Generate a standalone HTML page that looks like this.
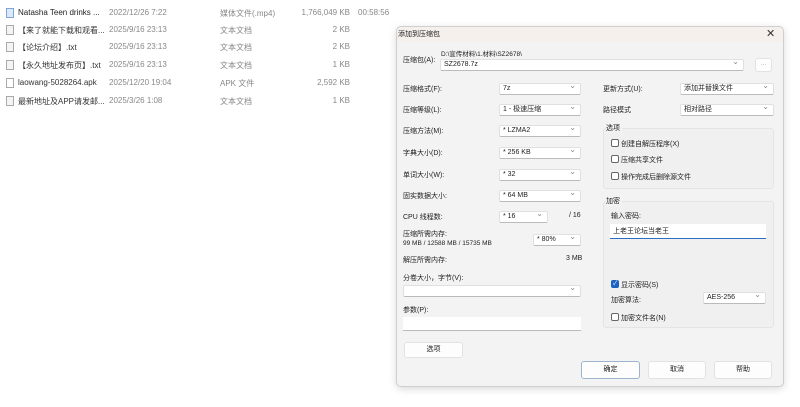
<!DOCTYPE html>
<html><head><meta charset="utf-8"><style>
*{margin:0;padding:0;box-sizing:border-box}
body{width:800px;height:407px;background:#fff;position:relative;overflow:hidden;font-family:"Liberation Sans","Noto Sans CJK SC",sans-serif;color:#222}
.a{position:absolute;white-space:nowrap}
.f{font-size:8px;color:#333}
.n{width:90px;overflow:hidden}
.g{color:#888}
.ic{position:absolute;width:8px;height:10px;border:1px solid #aaa;background:#f4f4f4}
.d{font-size:7px;color:#222}
.cb{position:absolute;background:#fff;border:1px solid #e0e0e0;border-bottom-color:#bbb;border-radius:2px;font-size:7px;padding-left:3px;line-height:10px}
.cb:after{content:"⌄";position:absolute;right:4px;top:-3px;color:#888;font-size:8px}
.chk{position:absolute;width:8px;height:8px;border:1px solid #666;border-radius:2px;background:#fff}
.btn{position:absolute;background:#fdfdfd;border:1px solid #e2e2e2;border-radius:3px;font-size:7px;text-align:center}
.grp{position:absolute;border:1px solid #e4e4e4;background:#f0f0f0;border-radius:3px}
</style></head><body>
<div class="ic" style="left:6px;top:8px;border-color:#7aa7d8;background:#dde9f8"></div>
<div class="a f n" style="left:18px;top:8px;color:#222">Natasha Teen drinks ...</div>
<div class="a f g" style="left:109px;top:8px">2022/12/26 7:22</div>
<div class="a f g" style="left:220px;top:8px">媒体文件(.mp4)</div>
<div class="a f g" style="left:300px;top:8px;width:50px;text-align:right">1,766,049 KB</div>
<div class="a f g" style="left:358px;top:8px">00:58:56</div>

<div class="ic" style="left:6px;top:25px"></div>
<div class="a f n" style="left:18px;top:25px">【来了就能下载和观看...</div>
<div class="a f g" style="left:109px;top:25px">2025/9/16 23:13</div>
<div class="a f g" style="left:220px;top:25px">文本文档</div>
<div class="a f g" style="left:300px;top:25px;width:50px;text-align:right">2 KB</div>

<div class="ic" style="left:6px;top:42px"></div>
<div class="a f n" style="left:18px;top:42px">【论坛介绍】.txt</div>
<div class="a f g" style="left:109px;top:42px">2025/9/16 23:13</div>
<div class="a f g" style="left:220px;top:42px">文本文档</div>
<div class="a f g" style="left:300px;top:42px;width:50px;text-align:right">2 KB</div>

<div class="ic" style="left:6px;top:60px"></div>
<div class="a f n" style="left:18px;top:60px">【永久地址发布页】.txt</div>
<div class="a f g" style="left:109px;top:60px">2025/9/16 23:13</div>
<div class="a f g" style="left:220px;top:60px">文本文档</div>
<div class="a f g" style="left:300px;top:60px;width:50px;text-align:right">1 KB</div>

<div class="ic" style="left:6px;top:78px;background:#fff"></div>
<div class="a f n" style="left:18px;top:78px">laowang-5028264.apk</div>
<div class="a f g" style="left:109px;top:78px">2025/12/20 19:04</div>
<div class="a f g" style="left:220px;top:78px">APK 文件</div>
<div class="a f g" style="left:300px;top:78px;width:50px;text-align:right">2,592 KB</div>

<div class="ic" style="left:6px;top:96px"></div>
<div class="a f n" style="left:18px;top:96px">最新地址及APP请发邮...</div>
<div class="a f g" style="left:109px;top:96px">2025/3/26 1:08</div>
<div class="a f g" style="left:220px;top:96px">文本文档</div>
<div class="a f g" style="left:300px;top:96px;width:50px;text-align:right">1 KB</div>

<div class="a" style="left:396px;top:26px;width:388px;height:361px;background:#f3f3f3;border:1px solid #cfcfcf;border-radius:5px;box-shadow:0 2px 8px rgba(0,0,0,.15)"></div>
<div class="a" style="left:397px;top:27px;width:386px;height:15px;background:#f6f0ed;border-radius:5px 5px 0 0"></div>
<div class="a d" style="left:398px;top:29px">添加到压缩包</div>
<div class="a" style="left:766px;top:27px;font-size:11px;color:#333">✕</div>

<div class="a d" style="left:403px;top:55px">压缩包(A):</div>
<div class="a d" style="left:441px;top:48px;font-size:6.5px">D:\宣传材料\1.材料\SZ2678\</div>
<div class="cb" style="left:440px;top:59px;width:304px;height:12px">SZ2678.7z</div>
<div class="btn" style="left:755px;top:58px;width:17px;height:14px;color:#aaa;line-height:10px">...</div>

<div class="a d" style="left:403px;top:84px">压缩格式(F):</div>
<div class="cb" style="left:499px;top:83px;width:82px;height:12px">7z</div>
<div class="a d" style="left:403px;top:105px">压缩等级(L):</div>
<div class="cb" style="left:499px;top:104px;width:82px;height:12px">1 - 极速压缩</div>
<div class="a d" style="left:403px;top:126px">压缩方法(M):</div>
<div class="cb" style="left:499px;top:125px;width:82px;height:12px">* LZMA2</div>
<div class="a d" style="left:403px;top:148px">字典大小(D):</div>
<div class="cb" style="left:499px;top:147px;width:82px;height:12px">* 256 KB</div>
<div class="a d" style="left:403px;top:170px">单词大小(W):</div>
<div class="cb" style="left:499px;top:169px;width:82px;height:12px">* 32</div>
<div class="a d" style="left:403px;top:191px">固实数据大小:</div>
<div class="cb" style="left:499px;top:190px;width:82px;height:12px">* 64 MB</div>
<div class="a d" style="left:403px;top:212px">CPU 线程数:</div>
<div class="cb" style="left:499px;top:211px;width:49px;height:12px">* 16</div>
<div class="a d" style="left:569px;top:212px">/ 16</div>
<div class="a d" style="left:403px;top:229px">压缩所需内存:</div>
<div class="a d" style="left:403px;top:240px;font-size:6.5px">99 MB / 12588 MB / 15735 MB</div>
<div class="cb" style="left:533px;top:234px;width:48px;height:12px">* 80%</div>
<div class="a d" style="left:403px;top:255px">解压所需内存:</div>
<div class="a d" style="left:566px;top:255px">3 MB</div>
<div class="a d" style="left:403px;top:273px">分卷大小，字节(V):</div>
<div class="cb" style="left:403px;top:285px;width:178px;height:12px"></div>
<div class="a d" style="left:403px;top:305px">参数(P):</div>
<div class="a" style="left:403px;top:317px;width:178px;height:14px;background:#fff;border-bottom:1px solid #bbb"></div>
<div class="btn" style="left:404px;top:342px;width:59px;height:16px;line-height:14px">选项</div>

<div class="a d" style="left:603px;top:84px">更新方式(U):</div>
<div class="cb" style="left:680px;top:83px;width:94px;height:12px">添加并替换文件</div>
<div class="a d" style="left:603px;top:105px">路径模式</div>
<div class="cb" style="left:680px;top:104px;width:94px;height:12px">相对路径</div>

<div class="grp" style="left:603px;top:128px;width:171px;height:61px"></div>
<div class="a d" style="left:606px;top:123px;background:#f3f3f3;padding-right:2px">选项</div>
<div class="chk" style="left:611px;top:139px"></div><div class="a d" style="left:621px;top:139px">创建自解压程序(X)</div>
<div class="chk" style="left:611px;top:155px"></div><div class="a d" style="left:621px;top:155px">压缩共享文件</div>
<div class="chk" style="left:611px;top:172px"></div><div class="a d" style="left:621px;top:172px">操作完成后删除源文件</div>

<div class="grp" style="left:603px;top:201px;width:171px;height:127px"></div>
<div class="a d" style="left:606px;top:196px;background:#f3f3f3;padding-right:2px">加密</div>
<div class="a d" style="left:611px;top:211px">输入密码:</div>
<div class="a" style="left:610px;top:224px;width:156px;height:15px;background:#fff;border-bottom:1px solid #2a6ec0"></div>
<div class="a d" style="left:613px;top:226px">上老王论坛当老王</div>
<div class="chk" style="left:611px;top:280px;background:#1a64c0;border-color:#1a64c0;color:#fff;font-size:6px;line-height:6px;text-align:center">✓</div>
<div class="a d" style="left:621px;top:280px">显示密码(S)</div>
<div class="a d" style="left:611px;top:295px">加密算法:</div>
<div class="cb" style="left:703px;top:292px;width:63px;height:12px">AES-256</div>
<div class="chk" style="left:611px;top:313px"></div><div class="a d" style="left:621px;top:313px">加密文件名(N)</div>

<div class="btn" style="left:581px;top:361px;width:59px;height:18px;line-height:16px;border-color:#9db4cf">确定</div>
<div class="btn" style="left:648px;top:361px;width:58px;height:18px;line-height:16px">取消</div>
<div class="btn" style="left:714px;top:361px;width:58px;height:18px;line-height:16px">帮助</div>
</body></html>
